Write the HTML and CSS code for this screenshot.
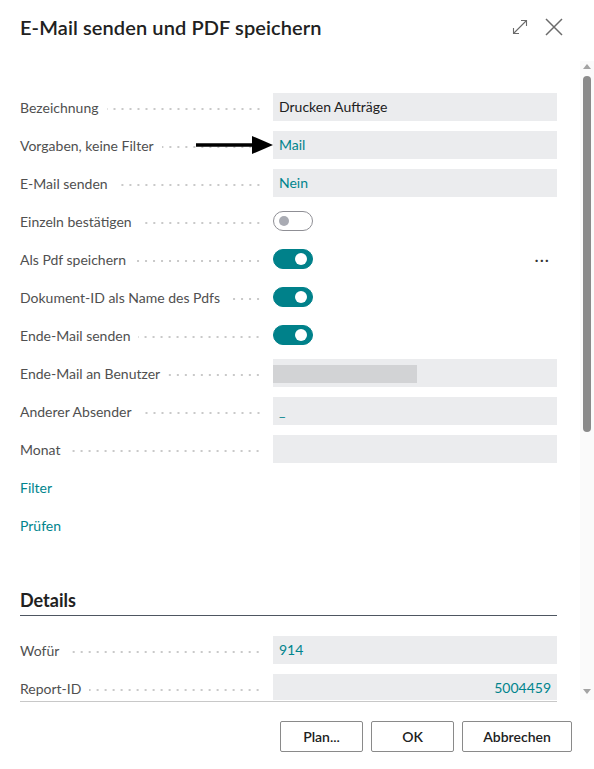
FILE: index.html
```html
<!DOCTYPE html>
<html lang="de">
  <head>
    <meta charset="UTF-8" />
    <title>E-Mail senden und PDF speichern</title>
    <meta name="viewport" content="width=device-width, initial-scale=1" />
    <link rel="stylesheet" href="styles.css">
  </head>
  <body>
    <div class="dialog">
      <header class="dialog-header">
        <h1>E-Mail senden und PDF speichern</h1>
        <div class="header-actions">
          <!-- expand -->
          <svg class="icon-expand" width="16" height="16" viewBox="0 0 16 16">
            <path d="M1.5 14.5 L14.5 1.5 M9 1.5 H14.5 V7 M1.5 9 V14.5 H7" fill="none" stroke="#6b6b6b" stroke-width="1.1" />
          </svg>
          <!-- close -->
          <svg class="icon-close" width="18" height="18" viewBox="0 0 18 18">
            <path d="M1 1 L17 17 M17 1 L1 17" fill="none" stroke="#6b6b6b" stroke-width="1.5" />
          </svg>
        </div>
      </header>

      <div class="dialog-body">
        <div class="content">
          <div class="fields">
            <div class="row">
              <span class="label">Bezeichnung</span>
              <div class="field">Drucken Aufträge</div>
            </div>
            <div class="row">
              <span class="label">Vorgaben, keine Filter</span>
              <div class="field link">Mail</div>
              <svg class="pointer-arrow" width="77" height="20" viewBox="0 0 77 20">
                <path d="M0 9.3 H58 V10.7 H0 Z" fill="#000" stroke="#000" stroke-width="2.2" />
                <path d="M56 1 L77 10 L56 19 Z" fill="#000" />
              </svg>
            </div>
            <div class="row">
              <span class="label">E-Mail senden</span>
              <div class="field link">Nein</div>
            </div>
            <div class="row">
              <span class="label">Einzeln bestätigen</span>
              <div class="toggle-cell"><span class="toggle"></span></div>
            </div>
            <div class="row">
              <span class="label">Als Pdf speichern</span>
              <div class="toggle-cell">
                <span class="toggle on"></span>
                <span class="more">&middot;&middot;&middot;</span>
              </div>
            </div>
            <div class="row">
              <span class="label">Dokument-ID als Name des Pdfs</span>
              <div class="toggle-cell"><span class="toggle on"></span></div>
            </div>
            <div class="row">
              <span class="label">Ende-Mail senden</span>
              <div class="toggle-cell"><span class="toggle on"></span></div>
            </div>
            <div class="row">
              <span class="label">Ende-Mail an Benutzer</span>
              <div class="field"><span class="placeholder-block"></span></div>
            </div>
            <div class="row">
              <span class="label">Anderer Absender</span>
              <div class="field link">_</div>
            </div>
            <div class="row">
              <span class="label">Monat</span>
              <div class="field"></div>
            </div>
            <div class="row">
              <a class="action">Filter</a>
            </div>
            <div class="row">
              <a class="action">Prüfen</a>
            </div>
          </div>

          <h2 class="section-title">Details</h2>
          <div class="fields">
            <div class="row">
              <span class="label">Wofür</span>
              <div class="field link">914</div>
            </div>
            <div class="row">
              <span class="label">Report-ID</span>
              <div class="field link number">5004459</div>
            </div>
          </div>
        </div>

        <div class="scrollbar">
          <span class="arrow-up"></span>
          <div class="track"><span class="thumb"></span></div>
          <span class="arrow-down"></span>
        </div>
      </div>

      <footer class="dialog-footer">
        <button class="btn btn-plan">Plan...</button>
        <button class="btn btn-ok">OK</button>
        <button class="btn btn-cancel">Abbrechen</button>
      </footer>
    </div>
  </body>
</html>
```

FILE: styles.css
```css
/* Request page dialog */
body {
  font-family: "Segoe UI", Lato, "Open Sans", sans-serif;
  margin: 0;
  padding: 0;
  background: #fff;
  color: #212121;
}
.dialog {
  width: 594px;
  height: 769px;
  display: flex;
  flex-direction: column;
  overflow: hidden;
}
.dialog-header {
  height: 54px;
  display: flex;
  align-items: center;
  justify-content: space-between;
  padding: 0 31px 0 20px;
  flex-shrink: 0;
}
.dialog-header h1 {
  margin: 0;
  font-size: 20px;
  font-weight: 600;
  letter-spacing: 0.1px;
  color: #212121;
}
.header-actions {
  display: flex;
  align-items: center;
  gap: 17px;
}
.icon-expand {
  width: 16px;
  height: 16px;
}

/* scroll area */
.dialog-body {
  flex: 1;
  display: flex;
  min-height: 0;
  border-bottom: 1px solid transparent;
}
.content {
  flex: 1;
  padding: 39px 23px 0 20px;
  overflow: hidden;
  position: relative;
}
.fields {
  display: flex;
  flex-direction: column;
  gap: 10px;
}
.row {
  display: flex;
  align-items: center;
  height: 28px;
  font-size: 14px;
  position: relative;
}
.label {
  width: 253px;
  flex-shrink: 0;
  display: flex;
  align-items: center;
  color: #505050;
  white-space: nowrap;
}
.label::after {
  content: "";
  flex: 1;
  height: 2px;
  margin: 4px 11px 0 8px;
  background: radial-gradient(circle, #c9c9c9 0.9px, transparent 1.1px) right center / 8px 2px repeat-x;
}
.field {
  flex: 1;
  height: 28px;
  line-height: 28px;
  background: #ebecee;
  padding: 0 6px;
  box-sizing: border-box;
  color: #212121;
  white-space: nowrap;
  position: relative;
}
.field.link {
  color: #00848d;
}
.field.number {
  text-align: right;
}
.placeholder-block {
  position: absolute;
  left: 0;
  top: 6px;
  width: 144px;
  height: 18px;
  background: #d2d3d5;
}
.pointer-arrow {
  position: absolute;
  left: 176px;
  top: 4px;
}

/* toggles */
.toggle-cell {
  flex: 1;
  display: flex;
  align-items: center;
  justify-content: space-between;
}
.toggle {
  width: 40px;
  height: 20px;
  box-sizing: border-box;
  border-radius: 10px;
  border: 1px solid #8f8f95;
  background: #fff;
  position: relative;
}
.toggle::after {
  content: "";
  position: absolute;
  top: 4px;
  left: 5px;
  width: 10px;
  height: 10px;
  border-radius: 50%;
  background: #a9abb3;
}
.toggle.on {
  border-color: #00818a;
  background: #00818a;
}
.toggle.on::after {
  left: auto;
  right: 5px;
  top: 3px;
  width: 12px;
  height: 12px;
  background: #fff;
}
.more {
  color: #333;
  font-size: 16px;
  letter-spacing: 1px;
  margin-right: 7px;
  line-height: 1;
}
.action {
  color: #00848d;
  font-size: 14px;
  cursor: pointer;
}

.section-title {
  margin: 37px 0 20px;
  padding: 12px 0 3px;
  font-size: 18px;
  line-height: 24px;
  font-weight: 700;
  color: #212121;
  border-bottom: 1px solid #4e5661;
}

/* scrollbar */
.scrollbar {
  width: 14px;
  margin-top: 7px;
  background: #fafafa;
  display: flex;
  flex-direction: column;
  align-items: center;
  flex-shrink: 0;
}
.arrow-up,
.arrow-down {
  width: 0;
  height: 0;
  border-left: 4px solid transparent;
  border-right: 4px solid transparent;
  margin: 3px 0;
}
.arrow-up {
  border-bottom: 5px solid #a3a3a3;
}
.arrow-down {
  border-top: 5px solid #a3a3a3;
  margin-bottom: 6px;
}
.track {
  flex: 1;
  width: 100%;
  display: flex;
  justify-content: center;
  padding-top: 4px;
}
.thumb {
  width: 8px;
  height: 356px;
  border-radius: 4px;
  background: #8a8a8a;
}

/* footer */
.dialog-footer {
  height: 68px;
  flex-shrink: 0;
  display: flex;
  justify-content: flex-end;
  align-items: flex-start;
  gap: 8px;
  padding: 20px 22px 0 0;
  box-sizing: border-box;
  position: relative;
}
.dialog-footer::before {
  content: "";
  position: absolute;
  top: 0;
  left: 20px;
  width: 537px;
  height: 1px;
  background: #c8c8c8;
}
.btn {
  height: 31px;
  width: 83px;
  font-family: inherit;
  font-size: 14px;
  font-weight: 600;
  color: #212121;
  background: #fff;
  border: 1px solid #8a8a8a;
  border-radius: 2px;
  padding: 0;
}
.btn-cancel {
  width: 110px;
}
```
